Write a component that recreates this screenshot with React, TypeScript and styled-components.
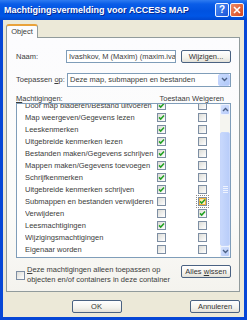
import styled, { createGlobalStyle } from "styled-components";

const GlobalStyle = createGlobalStyle`
  html, body {
    margin: 0;
    padding: 0;
    width: 247px;
    height: 320px;
    overflow: hidden;
    background: #fff;
  }
  body {
    font-family: "Liberation Sans", Arial, sans-serif;
  }
  * {
    box-sizing: border-box;
  }
`;

const permissions: { name: string; allow: boolean; deny: boolean; hot?: boolean }[] = [
    { name: "Door map bladeren/Bestand uitvoeren", allow: true, deny: false },
    { name: "Map weergeven/Gegevens lezen", allow: true, deny: false },
    { name: "Leeskenmerken", allow: true, deny: false },
    { name: "Uitgebreide kenmerken lezen", allow: true, deny: false },
    { name: "Bestanden maken/Gegevens schrijven", allow: true, deny: false },
    { name: "Mappen maken/Gegevens toevoegen", allow: true, deny: false },
    { name: "Schrijfkenmerken", allow: true, deny: false },
    { name: "Uitgebreide kenmerken schrijven", allow: true, deny: false },
    { name: "Submappen en bestanden verwijderen", allow: false, deny: true, hot: true },
    { name: "Verwijderen", allow: false, deny: true },
    { name: "Leesmachtigingen", allow: true, deny: false },
    { name: "Wijzigingsmachtigingen", allow: false, deny: false },
    { name: "Eigenaar worden", allow: false, deny: false },
];

const Chevron = ({ up }: { up?: boolean }) => (
    <svg width="7" height="5" viewBox="0 0 7 5">
        <path
            d={up ? "M1 4 L3.5 1.5 L6 4" : "M1 1 L3.5 3.5 L6 1"}
            fill="none"
            stroke="#4D6185"
            strokeWidth="1.4"
        />
    </svg>
);

const Check = ({ checked, hot }: { checked: boolean; hot?: boolean }) => (
    <CheckBox $hot={hot}>
        {checked && (
            <svg width="7" height="7" viewBox="0 0 7 7">
                <path d="M1 3.4 L2.7 5.1 L6 1.6" fill="none" stroke="#21A121" strokeWidth="1.5" />
            </svg>
        )}
    </CheckBox>
);

export default function App() {
    return (
        <>
            <GlobalStyle />
            <Window>
                <TitleBar>
                    <Title>Machtigingsvermelding voor ACCESS MAP</Title>
                    <TitleButtons>
                        <HelpButton>?</HelpButton>
                        <CloseButton>
                            <svg width="8" height="8" viewBox="0 0 8 8">
                                <path d="M1 1 L7 7 M7 1 L1 7" stroke="#fff" strokeWidth="1.6" />
                            </svg>
                        </CloseButton>
                    </TitleButtons>
                </TitleBar>

                <Body>
                    <Tabs>
                        <Tab>Object</Tab>
                    </Tabs>
                    <Panel>
                        <FieldRow>
                            <Label $width={50}>Naam:</Label>
                            <TextBox>Ivashkov, M (Maxim) (maxim.ivas</TextBox>
                            <Button $width={50}><span>Wijzigen...</span></Button>
                        </FieldRow>
                        <FieldRow $gap={10}>
                            <Label $width={51}>Toepassen <u>o</u>p:</Label>
                            <Select>
                                <span>Deze map, submappen en bestanden</span>
                                <DropButton>
                                    <Chevron />
                                </DropButton>
                            </Select>
                        </FieldRow>
                        <ListHeader>
                            <span><u>M</u>achtigingen:</span>
                            <span>Toestaan Weigeren</span>
                        </ListHeader>
                        <ListBox>
                            <Rows>
                                <RowsScrolled>
                                    {permissions.map((p) => (
                                        <PermRow key={p.name}>
                                            <PermName>{p.name}</PermName>
                                            <Check checked={p.allow} />
                                            <span />
                                            <Check checked={p.deny} hot={p.hot} />
                                        </PermRow>
                                    ))}
                                </RowsScrolled>
                            </Rows>
                            <ScrollBar>
                                <ScrollButton>
                                    <Chevron up />
                                </ScrollButton>
                                <Track>
                                    <Thumb>
                                        <Grip />
                                        <Grip />
                                        <Grip />
                                        <Grip />
                                    </Thumb>
                                </Track>
                                <ScrollButton>
                                    <Chevron />
                                </ScrollButton>
                            </ScrollBar>
                        </ListBox>
                        <BottomRow>
                            <CheckLabel>
                                <Check checked={false} />
                                <span>
                                    <u>D</u>eze machtigingen alleen toepassen op
                                    <br />
                                    objecten en/of containers in deze container
                                </span>
                            </CheckLabel>
                            <Button $width={50}>
                                <span>Alles <u>w</u>issen</span>
                            </Button>
                        </BottomRow>
                    </Panel>
                    <Footer>
                        <Button $width={50}><span>OK</span></Button>
                        <Button $width={50}><span>Annuleren</span></Button>
                    </Footer>
                </Body>
            </Window>
        </>
    );
}

const Window = styled.div`
    width: 247px;
    height: 320px;
    display: flex;
    flex-direction: column;
    background: #0747d6;
`;

const TitleBar = styled.div`
    height: 20px;
    display: flex;
    align-items: center;
    padding: 0 3px 0 4px;
    background: linear-gradient(#2f7bf0 0%, #0a5de8 20%, #0052e0 55%, #0056e6 80%, #0047cf 100%);
`;

const Title = styled.div`
    color: #fff;
    font-weight: bold;
    font-size: 9px;
    white-space: nowrap;
    text-shadow: 1px 1px 0 #0a2a90;
`;

const TitleButtons = styled.div`
    margin-left: auto;
    display: flex;
    gap: 1px;
`;

const TitleButton = styled.div`
    width: 14px;
    height: 14px;
    border: 1px solid #f0f4ff;
    border-radius: 2px;
    display: flex;
    align-items: center;
    justify-content: center;
    color: #fff;
`;

const HelpButton = styled(TitleButton)`
    background: linear-gradient(135deg, #4a8cf7, #1c55d6);
    font-weight: bold;
    font-size: 10px;
    line-height: 1;
`;

const CloseButton = styled(TitleButton)`
    background: linear-gradient(135deg, #ee8a63, #d4461f);
`;

const Body = styled.div`
    flex: 1;
    margin: 0 3px 3px;
    background: #ece9d8;
    padding: 4px 4px 4px 3px;
    display: flex;
    flex-direction: column;
    font-size: 7.5px;
    color: #3c3c3c;
`;

const Tabs = styled.div`
    height: 13px;
    display: flex;
    align-items: flex-start;
`;

const Tab = styled.div`
    position: relative;
    z-index: 1;
    width: 32px;
    height: 14px;
    margin-bottom: -1px;
    border: 1px solid #919b9c;
    border-top: 2px solid #e9a23a;
    border-bottom: none;
    border-radius: 3px 3px 0 0;
    background: #fcfcfe;
    display: flex;
    align-items: center;
    justify-content: center;
    padding-bottom: 1px;
`;

const Panel = styled.div`
    height: 255px;
    border: 1px solid #919b9c;
    background: linear-gradient(#fcfcfe 0%, #fbfbf9 70%, #f4f3ee 100%);
    padding: 12px 8px 0 9px;
    display: flex;
    flex-direction: column;
`;

const FieldRow = styled.div<{ $gap?: number }>`
    height: 13px;
    margin-top: ${({ $gap }) => $gap ?? 0}px;
    display: flex;
    align-items: center;
`;

const Label = styled.div<{ $width: number }>`
    width: ${({ $width }) => $width}px;
    flex-shrink: 0;
    white-space: nowrap;
`;

const TextBox = styled.div`
    width: 110px;
    height: 13px;
    border: 1px solid #7f9db9;
    background: #fff;
    padding-left: 2px;
    white-space: nowrap;
    overflow: hidden;
    display: flex;
    align-items: center;
`;

const Button = styled.div<{ $width: number }>`
    width: ${({ $width }) => $width}px;
    height: 13px;
    margin-left: auto;
    flex-shrink: 0;
    border: 1px solid #4a6282;
    border-radius: 2px;
    background: linear-gradient(#ffffff 0%, #f4f3ee 60%, #e3e1d8 100%);
    display: flex;
    align-items: center;
    justify-content: center;
    color: #333;
    white-space: nowrap;
`;

const Select = styled.div`
    flex: 1;
    height: 14px;
    border: 1px solid #7f9db9;
    background: #fff;
    display: flex;
    align-items: center;
    padding-left: 2px;
    white-space: nowrap;
    overflow: hidden;

    span {
        flex: 1;
    }
`;

const DropButton = styled.div`
    width: 12px;
    height: 12px;
    border: 1px solid #c3d3fd;
    border-radius: 2px;
    background: linear-gradient(135deg, #c9dbfd, #b0c8f8);
    display: flex;
    align-items: center;
    justify-content: center;
`;

const ListHeader = styled.div`
    height: 10px;
    margin-top: 7px;
    display: flex;
    align-items: center;
    justify-content: space-between;
    padding-right: 7px;
    white-space: nowrap;
`;

const ListBox = styled.div`
    height: 155px;
    border: 1px solid #7f9db9;
    background: #fff;
    display: flex;
`;

const Rows = styled.div`
    flex: 1;
    overflow: hidden;
`;

const RowsScrolled = styled.div`
    margin-top: -5px;
`;

const PermRow = styled.div`
    height: 12px;
    padding-left: 8px;
    display: grid;
    grid-template-columns: 1fr 9px 32px 9px 13px;
    align-items: center;
`;

const PermName = styled.span`
    white-space: nowrap;
    overflow: hidden;
`;

const CheckBox = styled.span<{ $hot?: boolean }>`
    width: 9px;
    height: 9px;
    flex-shrink: 0;
    border: 1px solid #7d8ea3;
    background: ${({ $hot }) =>
        $hot ? "linear-gradient(135deg, #fde3a0, #fff6dc)" : "linear-gradient(135deg, #dcdcd7, #ffffff)"};
    box-shadow: ${({ $hot }) => ($hot ? "inset 0 0 0 1px #f6b43a" : "none")};
    outline: ${({ $hot }) => ($hot ? "1px dotted #8a8a8a" : "none")};
    outline-offset: 1px;
    display: flex;
    align-items: center;
    justify-content: center;
`;

const ScrollBar = styled.div`
    width: 10px;
    display: flex;
    flex-direction: column;
    background: #f5f5f0;
`;

const ScrollButton = styled.div`
    height: 11px;
    border: 1px solid #eef3ff;
    border-radius: 2px;
    background: linear-gradient(135deg, #d4e1fd, #b7cbf8);
    display: flex;
    align-items: center;
    justify-content: center;
`;

const Track = styled.div`
    flex: 1;
    display: flex;
    flex-direction: column;
`;

const Thumb = styled.div`
    margin-top: 17px;
    height: 114px;
    border: 1px solid #c6d6fb;
    border-radius: 2px;
    background: linear-gradient(90deg, #c8d8fc, #b9cdf9);
    display: flex;
    flex-direction: column;
    align-items: center;
    justify-content: center;
    gap: 1px;
`;

const Grip = styled.div`
    width: 5px;
    height: 1px;
    background: #eef3ff;
`;

const BottomRow = styled.div`
    margin-top: 7px;
    display: flex;
    align-items: flex-start;
`;

const CheckLabel = styled.div`
    display: flex;
    align-items: center;
    gap: 2px;
    line-height: 10px;
    white-space: nowrap;
`;

const Footer = styled.div`
    margin-top: 8px;
    display: flex;
    justify-content: flex-end;
    gap: 3px;
`;
